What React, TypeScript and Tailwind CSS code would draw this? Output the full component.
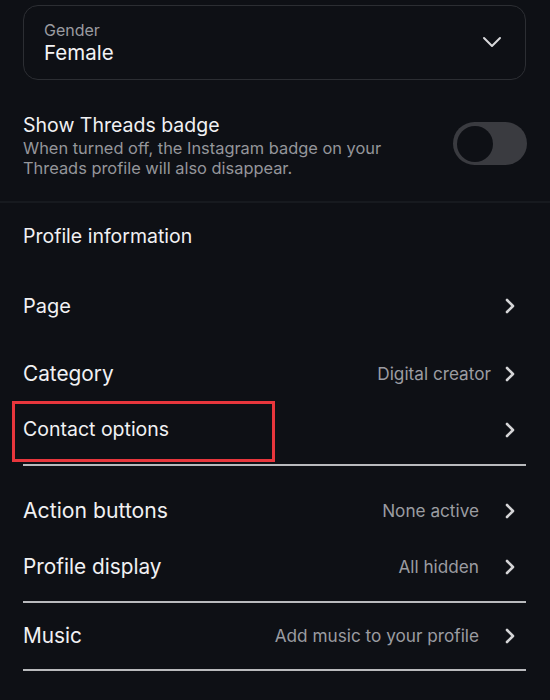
import React from 'react';

const ChevronRight = () => (
  <svg width="12" height="18" viewBox="0 0 12 18" fill="none" className="shrink-0">
    <path d="M3 3l6 6-6 6" stroke="#d4d4d6" strokeWidth="2.6" strokeLinecap="round" strokeLinejoin="round" />
  </svg>
);

const ChevronDown = () => (
  <svg width="20" height="12" viewBox="0 0 20 12" fill="none">
    <path d="M2 2l8 8 8-8" stroke="#d8d8da" strokeWidth="2" strokeLinecap="round" strokeLinejoin="round" />
  </svg>
);

type RowProps = {
  label: string;
  value?: string;
  h: string;
  size?: string;
  gap?: string;
  arrow?: boolean;
};

const Row = ({ label, value, h, size = 'text-[20.8px]', gap = 'gap-[25px]', arrow = true }: RowProps) => (
  <div className={`flex items-center justify-between pl-[23px] pr-[34px] pt-[2px] ${h}`}>
    <span className={`${size} text-[#f1f1f3]`}>{label}</span>
    {arrow && (
      <div className={`flex items-center ${gap}`}>
        {value && <span className="text-[17.2px] text-[#9b9ca1]">{value}</span>}
        <ChevronRight />
      </div>
    )}
  </div>
);

const Divider = ({ className }: { className: string }) => (
  <div className={`mx-[23px] w-[503px] h-[2px] bg-[#b9babd] ${className}`} />
);

export default function App() {
  return (
    <div className="w-[550px] h-[700px] overflow-hidden bg-[#0e1015] font-['Inter','Noto_Sans',sans-serif]">
      <div className="pt-[5px]">
        <div className="mx-[23px] w-[503px] h-[75px] rounded-[15px] border border-[#2c2e33] flex items-center justify-between pl-[20px] pr-[23px]">
          <div className="flex flex-col">
            <span className="text-[16px] leading-[19px] text-[#9a9ba0]">Gender</span>
            <span className="text-[20.5px] leading-[25px] text-[#f3f3f5]">Female</span>
          </div>
          <div className="-mt-[2px]">
            <ChevronDown />
          </div>
        </div>
      </div>

      <div className="flex items-start justify-between pl-[23px] pr-[23px] pt-[33px] pb-[23px]">
        <div className="flex flex-col">
          <span className="text-[19.5px] leading-[24px] text-[#f1f1f3]">Show Threads badge</span>
          <span className="mt-[1px] text-[16.4px] leading-[20px] text-[#95969b]">
            When turned off, the Instagram badge on your
            <br />
            Threads profile will also disappear.
          </span>
        </div>
        <div className="mt-[9px] w-[74px] h-[43px] rounded-full bg-[#3a3b40] flex items-center pl-[4px]">
          <div className="w-[36px] h-[36px] rounded-full bg-[#0e1015]" />
        </div>
      </div>

      <div className="h-[2px] bg-[#171a1f]" />

      <Row label="Profile information" h="h-[66px]" size="text-[19.5px]" arrow={false} />
      <Row label="Page" h="h-[72px]" size="text-[20px]" />
      <Row label="Category" value="Digital creator" h="h-[64px]" gap="gap-[13px]" />
      <div className="relative">
        <Row label="Contact options" h="h-[48px]" size="text-[19.5px]" />
        <div className="absolute left-[12px] top-[-4px] w-[263px] h-[61px] border-[3px] border-[#e8363c]" />
      </div>
      <Divider className="mt-[11px]" />

      <div className="mt-[19px]">
        <Row label="Action buttons" value="None active" h="h-[50px]" size="text-[21.2px]" />
      </div>
      <div className="mt-[6px]">
        <Row label="Profile display" value="All hidden" h="h-[50px]" />
      </div>
      <Divider className="mt-[10px]" />
      <Row label="Music" value="Add music to your profile" h="h-[64px]" />
      <Divider className="mt-[2px]" />
    </div>
  );
}
